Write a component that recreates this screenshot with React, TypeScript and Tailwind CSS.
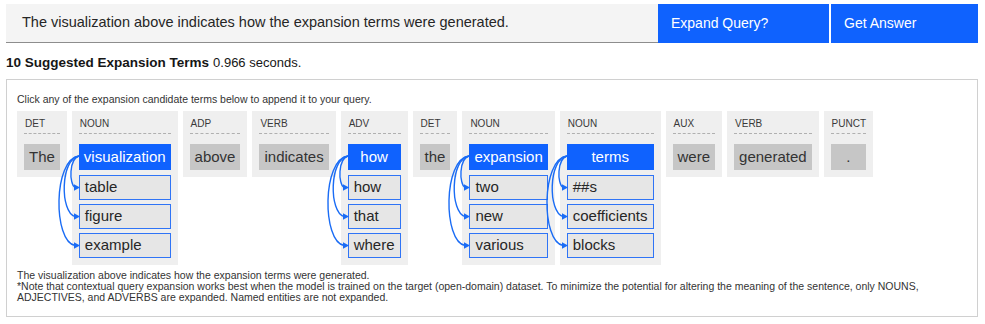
const FONT = { fontFamily: '"Liberation Sans", Arial, sans-serif' }

interface Column {
  pos: string
  token: string
  expansions?: string[]
}

const columns: Column[] = [
  { pos: 'DET', token: 'The' },
  { pos: 'NOUN', token: 'visualization', expansions: ['table', 'figure', 'example'] },
  { pos: 'ADP', token: 'above' },
  { pos: 'VERB', token: 'indicates' },
  { pos: 'ADV', token: 'how', expansions: ['how', 'that', 'where'] },
  { pos: 'DET', token: 'the' },
  { pos: 'NOUN', token: 'expansion', expansions: ['two', 'new', 'various'] },
  { pos: 'NOUN', token: 'terms', expansions: ['##s', 'coefficients', 'blocks'] },
  { pos: 'AUX', token: 'were' },
  { pos: 'VERB', token: 'generated' },
  { pos: 'PUNCT', token: '.' }
]

// arrow end points, relative to the top-left corner of the main token
const arrowEnds = [
  { y: 43.5, w: 10 },
  { y: 72.5, w: 19 },
  { y: 101.5, w: 26 }
]

function Arrows() {
  return (
    <svg
      className="absolute left-0 top-0 pointer-events-none"
      width="1"
      height="1"
      overflow="visible"
    >
      {arrowEnds.map((a, i) => (
        <g key={i}>
          <path
            d={`M0 12 C ${-a.w} 15, ${-a.w} ${a.y - 4}, -4 ${a.y}`}
            fill="none"
            stroke="#1a6cf5"
            strokeWidth="1.4"
          />
          <polygon points={`1,${a.y} -5,${a.y - 3.2} -5,${a.y + 3.2}`} fill="#1a6cf5" />
        </g>
      ))}
    </svg>
  )
}

function TokenColumn({ col }: { col: Column }) {
  const expanded = !!col.expansions
  return (
    <div className="flex flex-col bg-[#efefef] px-[7px] pt-[7px] pb-[7px]">
      <div className="text-[10px] leading-[12px] text-[#393939] pl-px pb-[3px] border-b border-dashed border-[#b0b0b0]">
        {col.pos}
      </div>
      <div className="relative mt-[10px] flex flex-col">
        <div
          className={
            expanded
              ? 'h-[26px] px-[5px] flex items-center justify-center bg-[#0f62fe] text-white text-[15px] whitespace-nowrap'
              : 'h-[26px] px-[5px] flex items-center justify-center bg-[#c6c6c6] text-[#333333] text-[15px] whitespace-nowrap'
          }
        >
          {col.token}
        </div>
        {col.expansions && (
          <div className="mt-[5px] flex flex-col gap-[4px]">
            {col.expansions.map((e) => (
              <div
                key={e}
                className="h-[25px] px-[5px] flex items-center border border-[#2f74f6] bg-[#e6e6e6] text-[#262626] text-[15px] whitespace-nowrap"
              >
                {e}
              </div>
            ))}
          </div>
        )}
        {expanded && <Arrows />}
      </div>
    </div>
  )
}

export default function App() {
  return (
    <div className="w-[985px] h-[324px] bg-white pl-[6px] pt-[4px]" style={FONT}>
      <div className="flex w-[972px] h-[39px]">
        <div className="flex-1 flex items-center bg-[#f4f4f4] border-b border-[#8d8d8d] pl-[16px] text-[14.5px] text-[#262626]">
          The visualization above indicates how the expansion terms were generated.
        </div>
        <button className="w-[171px] h-full bg-[#0f62fe] text-white text-[14px] text-left pl-[13px]">
          Expand Query?
        </button>
        <button className="ml-[2px] w-[147px] h-full bg-[#0f62fe] text-white text-[14px] text-left pl-[13px]">
          Get Answer
        </button>
      </div>

      <div className="mt-[11px] h-[18px] flex items-center text-[#161616]">
        <span className="font-bold text-[13.5px]">10 Suggested Expansion Terms</span>
        <span className="ml-[4px] text-[13px]">0.966 seconds.</span>
      </div>

      <div className="mt-[7px] w-[972px] h-[238px] border border-[#d0d0d0] pl-[10px] pt-[13px]">
        <div className="text-[10.5px] leading-[13px] text-[#333333]">
          Click any of the expansion candidate terms below to append it to your query.
        </div>
        <div className="mt-[5px] flex items-start gap-[5px]">
          {columns.map((c, i) => (
            <TokenColumn key={i} col={c} />
          ))}
        </div>
        <div className="mt-[5px] text-[10.5px] leading-[11px] text-[#333333]">
          <div>The visualization above indicates how the expansion terms were generated.</div>
          <div>
            *Note that contextual query expansion works best when the model is trained on the target
            (open-domain) dataset. To minimize the potential for altering the meaning of the sentence,
            only NOUNS,
            <br />
            ADJECTIVES, and ADVERBS are expanded. Named entities are not expanded.
          </div>
        </div>
      </div>
    </div>
  )
}
